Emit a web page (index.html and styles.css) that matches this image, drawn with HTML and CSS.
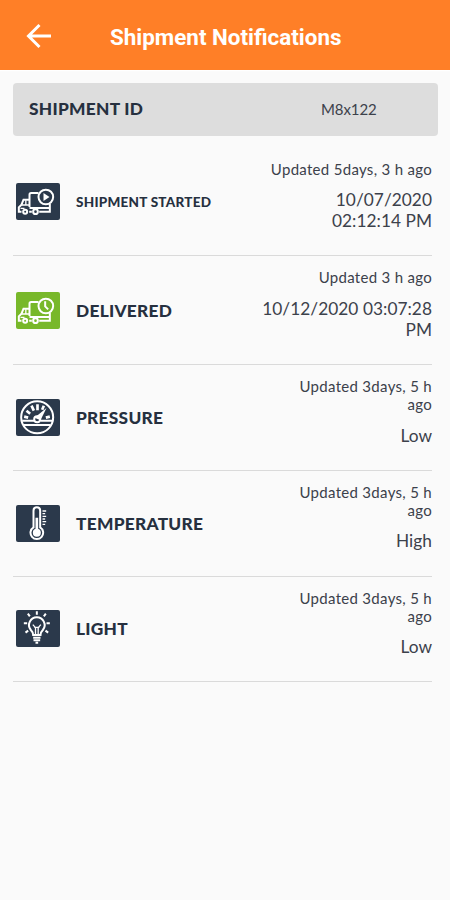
FILE: index.html
```html
<!DOCTYPE html>
<html lang="en">
<head>
<meta charset="utf-8">
<title>Shipment Notifications</title>
<link rel="stylesheet" href="styles.css">
</head>
<body>
<header class="bar">
  <svg class="back" viewBox="0 0 26 26"><path d="M25 13H2M13.5 2 2.500 13l11 11"/></svg>
  <h1 class="title">Shipment Notifications</h1>
</header>
<main>
  <section class="shipment"><span class="label id-label">SHIPMENT ID</span><span class="id-value">M8x122</span></section>
  <ul class="list">
    <li class="row">
      <svg class="icon" viewBox="0 0 129 111">
        <path d="M39 72V35q0-5 5-5h22M100 62v24H68M46 86h-8M15 86H7V73l8-8 6-15h18M39 75h60"/>
        <path class="thin" d="M15 66h24M28 52v14M12 76h12"/>
        <circle cx="26" cy="86" r="6"/><circle cx="57" cy="86" r="7"/><circle cx="88" cy="42" r="22"/>
        <path class="solid" d="M81 30v24l18-12z"/>
      </svg>
      <span class="label small">SHIPMENT STARTED</span>
      <div class="info"><p class="time">Updated 5days, 3 h ago</p><p class="value">10/07/2020<br>02:12:14 PM</p></div>
    </li>
    <li class="row">
      <svg class="icon green" viewBox="0 0 129 111">
        <path d="M39 72V35q0-5 5-5h22M100 62v24H68M46 86h-8M15 86H7V73l8-8 6-15h18M39 75h60"/>
        <path class="thin" d="M15 66h24M28 52v14M12 76h12"/>
        <circle cx="26" cy="86" r="6"/><circle cx="57" cy="86" r="7"/><circle cx="88" cy="42" r="22"/>
        <path d="M86 28v15l9 9"/>
      </svg>
      <span class="label">DELIVERED</span>
      <div class="info"><p class="time">Updated 3 h ago</p><p class="value">10/12/2020 03:07:28<br>PM</p></div>
    </li>
    <li class="row">
      <svg class="icon" viewBox="0 0 129 111">
        <circle cx="62" cy="55" r="48"/>
        <path d="M17 65h36M72 65h36M22 78h80"/>
        <path class="tick" d="M23 53l12 3M30 35l11 9M45 20l7 15M63 16v18M100 53l-12 3M82 20l-5 12"/>
        <path class="solid" d="M90 27 72 64 54 56z"/><circle cx="62" cy="61" r="9"/>
      </svg>
      <span class="label">PRESSURE</span>
      <div class="info"><p class="time">Updated 3days, 5 h<br>ago</p><p class="value">Low</p></div>
    </li>
    <li class="row">
      <svg class="icon" viewBox="0 0 129 111">
        <path d="M51 67V17q0-10 10-10t10 10v50a19 19 0 1 1-20 0z"/>
        <path class="tick" d="M61 38v44"/><circle class="solid" cx="61" cy="83" r="12"/>
        <path class="thin" d="M78 18h11M78 26h8M78 34h11M78 42h8M78 50h11M78 58h8"/>
      </svg>
      <span class="label">TEMPERATURE</span>
      <div class="info"><p class="time">Updated 3days, 5 h<br>ago</p><p class="value">High</p></div>
    </li>
    <li class="row">
      <svg class="icon" viewBox="0 0 129 111">
        <path d="M50 75q0-8-7-15c-13-16-1-38 18-38s31 22 18 38q-7 7-7 15zM50 83h22M51 91h20M57 98h8"/>
        <path class="thin" d="M57 73V53l-8-9M65 73V53l8-9M53 52h16"/>
        <path d="M61 4v10M34 11l6 8M88 11l-6 8M22 40h10M90 40h10M27 68l8-6M95 68l-8-6"/>
      </svg>
      <span class="label">LIGHT</span>
      <div class="info"><p class="time">Updated 3days, 5 h<br>ago</p><p class="value">Low</p></div>
    </li>
  </ul>
</main>
</body>
</html>
```
FILE: styles.css
```css
* { box-sizing: border-box; }
body { margin: 0; min-height: 900px; background: #fafafa; color: #3c414b; font-family: Lato, sans-serif; }
h1, p, ul { margin: 0; padding: 0; }
.bar { display: flex; align-items: center; height: 70px; padding: 2px 0 0 26px; background: #ff7f27; box-shadow: 0 1px 1px #fff; }
.back { width: 26px; height: 26px; fill: none; stroke: #fff; stroke-width: 3; }
.title { margin: 2px 0 0 58px; font: 700 22.4px/28px Roboto, sans-serif; color: #fff; white-space: nowrap; }
.shipment { display: flex; align-items: center; height: 53px; margin: 13px 12px 0 13px; padding: 0 0 2px 16px; background: #ddd; border-radius: 4px; }
.label { font-size: 17.3px; font-weight: 900; letter-spacing: .28px; color: #26303f; white-space: nowrap; }
.small { font-size: 13.5px; letter-spacing: .25px; }
.id-label { width: 292px; }
.id-value { font-size: 15px; letter-spacing: -.1px; }
.list { list-style: none; margin: 11.8px 18px 0 13px; }
.row { display: flex; align-items: center; padding: 12px 0 24.2px; border-bottom: 1px solid #dadada; }
.icon { flex: none; width: 44px; height: 37px; margin: 12px 16px 0 3px; border-radius: 2px; background: #2b394b; fill: none; stroke: #fff; stroke-width: 6; }
.green { background: #78b82a; }
.row .label { margin-top: 12px; }
.icon .thin { stroke-width: 4; }
.icon .tick { stroke-width: 8; }
.icon .solid { fill: #fff; stroke: none; }
.info { margin-left: auto; text-align: right; white-space: nowrap; }
.time { font-size: 15px; line-height: 18px; letter-spacing: .3px; }
.value { margin-top: 11.500px; font-size: 17.3px; line-height: 21px; letter-spacing: .04px; }
```
